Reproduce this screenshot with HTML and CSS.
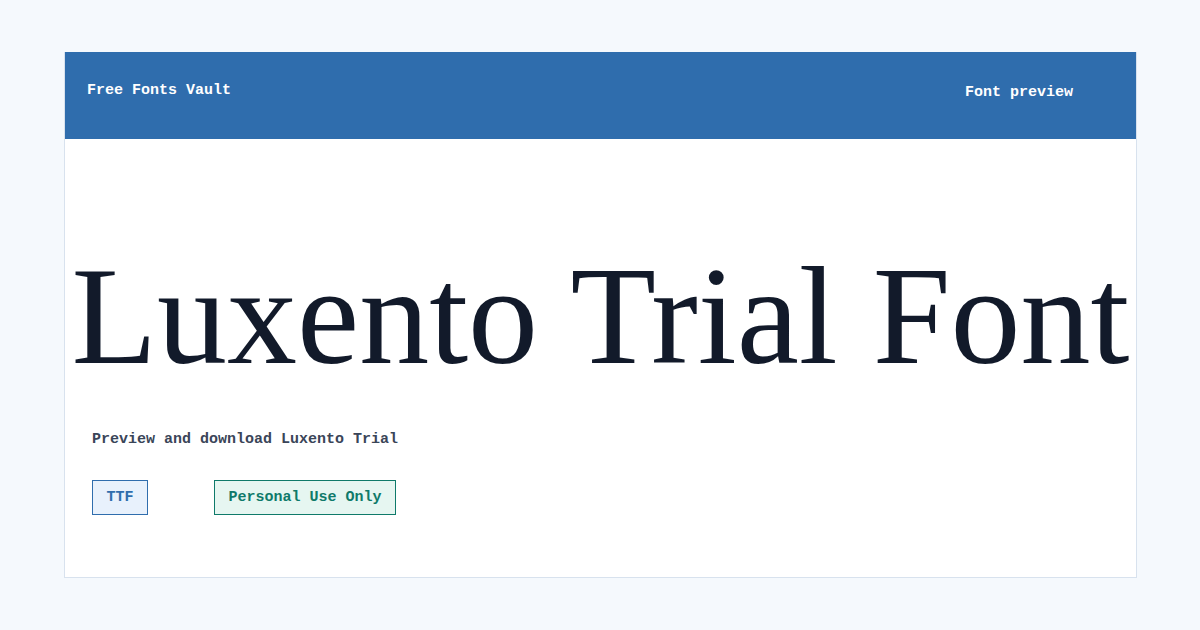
FILE: index.html
```html
<!DOCTYPE html>
<html>
<head>
    <meta charset="UTF-8">
    <title>Luxento Trial Font - Free Fonts Vault</title>
    <link rel="stylesheet" href="styles.css">
</head>
<body>
    <div class="card">
        <div class="header">
            <div class="brand">Free Fonts Vault</div>
            <div class="crumb">Font preview</div>
        </div>
        <div class="sample">Luxento Trial Font</div>
        <div class="info">
            <p class="lead">Preview and download Luxento Trial</p>
            <div class="tags">
                <span class="tag tag-format">TTF</span>
                <span class="tag tag-licence">Personal Use Only</span>
            </div>
        </div>
    </div>
</body>
</html>
```

FILE: styles.css
```css
body {
    background-color: #f5f9fd;
    margin: 0;
    padding: 52px 63px 0 64px;
    font-family: "Liberation Mono", "DejaVu Sans Mono", monospace;
    font-size: 15px;
    font-weight: bold;
}
.card {
    height: 526px;
    background: #fff;
    border: 1px solid #d8e2ee;
    border-top: 0;
    box-sizing: border-box;
    overflow: hidden;
}
.header {
    height: 87px;
    background: #2f6dad;
    color: #fff;
    display: flex;
    justify-content: space-between;
    padding: 0 64px 0 23px;
    margin: 0 -1px;
}
.brand {
    padding-top: 30px;
}
.crumb {
    padding-top: 32px;
}
.sample {
    font-family: "Liberation Serif", serif;
    font-size: 140px;
    font-weight: normal;
    line-height: 1;
    color: #121a2a;
    text-align: center;
    white-space: nowrap;
    margin-top: 107px;
}
.info {
    padding: 0 27px;
}
.lead {
    margin: 45px 0 0;
    color: #3a4558;
}
.tags {
    display: flex;
    gap: 66px;
    margin-top: 32px;
}
.tag {
    display: inline-block;
    padding: 8px 13.5px;
    border: 1px solid;
    line-height: 17px;
}
.tag-format {
    color: #2f6dad;
    background: #e8f1fc;
    border-color: #2f6dad;
}
.tag-licence {
    color: #0f7a6a;
    background: #e6f6f1;
    border-color: #0f7a6a;
}
```
